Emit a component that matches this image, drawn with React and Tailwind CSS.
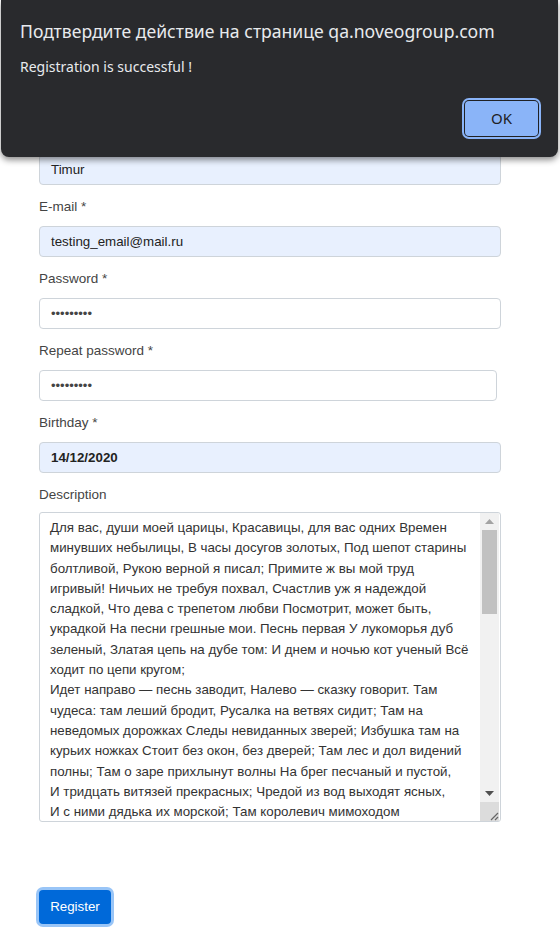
import React from "react";

const lines = [
  "Для вас, души моей царицы, Красавицы, для вас одних Времен",
  "минувших небылицы, В часы досугов золотых, Под шепот старины",
  "болтливой, Рукою верной я писал; Примите ж вы мой труд",
  "игривый! Ничьих не требуя похвал, Счастлив уж я надеждой",
  "сладкой, Что дева с трепетом любви Посмотрит, может быть,",
  "украдкой На песни грешные мои. Песнь первая У лукоморья дуб",
  "зеленый, Златая цепь на дубе том: И днем и ночью кот ученый Всё",
  "ходит по цепи кругом;",
  "Идет направо — песнь заводит, Налево — сказку говорит. Там",
  "чудеса: там леший бродит, Русалка на ветвях сидит; Там на",
  "неведомых дорожках Следы невиданных зверей; Избушка там на",
  "курьих ножках Стоит без окон, без дверей; Там лес и дол видений",
  "полны; Там о заре прихлынут волны На брег песчаный и пустой,",
  "И тридцать витязей прекрасных; Чредой из вод выходят ясных,",
  "И с ними дядька их морской; Там королевич мимоходом",
];

function Label({ children }) {
  return (
    <div className="mt-[14px] mb-[11px] h-4 leading-4 text-[13.5px] text-[#444]">{children}</div>
  );
}

function Field({ value, autofill, bold, w = "w-[462px]", dots }) {
  return (
    <div
      className={`${w} h-[31px] rounded-[4px] border border-[#ced4da] flex items-center px-[11px] text-[13.33px] text-[#222] ${
        autofill ? "bg-[#e8f0fe]" : "bg-white"
      } ${bold ? "font-bold" : ""}`}
    >
      {dots ? <span className="text-[13px] text-[#444]">•••••••••</span> : value}
    </div>
  );
}

export default function App() {
  return (
    <div
      className="relative w-[560px] h-[928px] bg-white overflow-hidden"
      style={{ fontFamily: '"Liberation Sans", Arial, sans-serif' }}
    >
      <div className="pl-[39px] pt-[154px]">
        <Field value="Timur" autofill />
        <Label>E-mail *</Label>
        <Field value="testing_email@mail.ru" autofill />
        <Label>Password *</Label>
        <Field dots />
        <Label>Repeat password *</Label>
        <Field dots w="w-[458px]" />
        <Label>Birthday *</Label>
        <Field value="14/12/2020" autofill bold />
        <Label>Description</Label>
        <div className="w-[462px] h-[310px] -mt-[2px] rounded-[3px] border border-[#ced4da] flex overflow-hidden">
          <div className="flex-1 pl-[10px] pt-[5px] text-[13.33px] leading-[20.3px] text-[#333] overflow-hidden">
            {lines.map((l, i) => (
              <div key={i} className="whitespace-nowrap">
                {l}
              </div>
            ))}
          </div>
          <div className="w-[19px] mr-px flex flex-col bg-[#f1f1f1]">
            <div className="h-[17px] flex items-center justify-center">
              <svg width="9" height="5" viewBox="0 0 9 5">
                <path d="M0 5 L4.5 0 L9 5 Z" fill="#a3a3a3" />
              </svg>
            </div>
            <div className="mx-[2px] h-[84px] bg-[#c1c1c1]" />
            <div className="flex-1" />
            <div className="h-[17px] flex items-center justify-center">
              <svg width="9" height="5" viewBox="0 0 9 5">
                <path d="M0 0 L4.5 5 L9 0 Z" fill="#505050" />
              </svg>
            </div>
            <div className="h-[19px] bg-[#dcdcdc] flex items-end justify-end">
              <svg width="12" height="12" viewBox="0 0 12 12">
                <path d="M11 4 L4 11 M11 8 L8 11" stroke="#666" strokeWidth="1.2" />
              </svg>
            </div>
          </div>
        </div>
        <div className="mt-[68px] w-[72px] h-[34px]">
          <button className="w-[72px] h-[34px] rounded-[4px] bg-[#0069d9] text-white text-[13.33px] ring-[3px] ring-[#99c5f7]">
            Register
          </button>
        </div>
      </div>

      <div
        className="absolute left-[1px] top-0 w-[557px] h-[157px] bg-[#292a2d] rounded-b-[8px] shadow-[0_3px_6px_rgba(0,0,0,0.45)]"
        style={{ fontFamily: '"Noto Sans", "Open Sans", sans-serif' }}
      >
        <div className="pl-[19px] pt-[19px] text-[17.6px] leading-6 text-[#e8eaed]">
          Подтвердите действие на странице qa.noveogroup.com
        </div>
        <div className="pl-[19px] mt-[14px] text-[14px] leading-5 text-[#e8eaed]">
          Registration is successful !
        </div>
        <div className="flex justify-end pr-[20px] mt-[24px]">
          <button className="w-[73px] h-[35px] rounded-[4px] bg-[#8ab4f8] text-[#202124] text-[15px] ring-2 ring-[#8ab4f8] ring-offset-1 ring-offset-[#202124]">
            OK
          </button>
        </div>
      </div>
    </div>
  );
}
